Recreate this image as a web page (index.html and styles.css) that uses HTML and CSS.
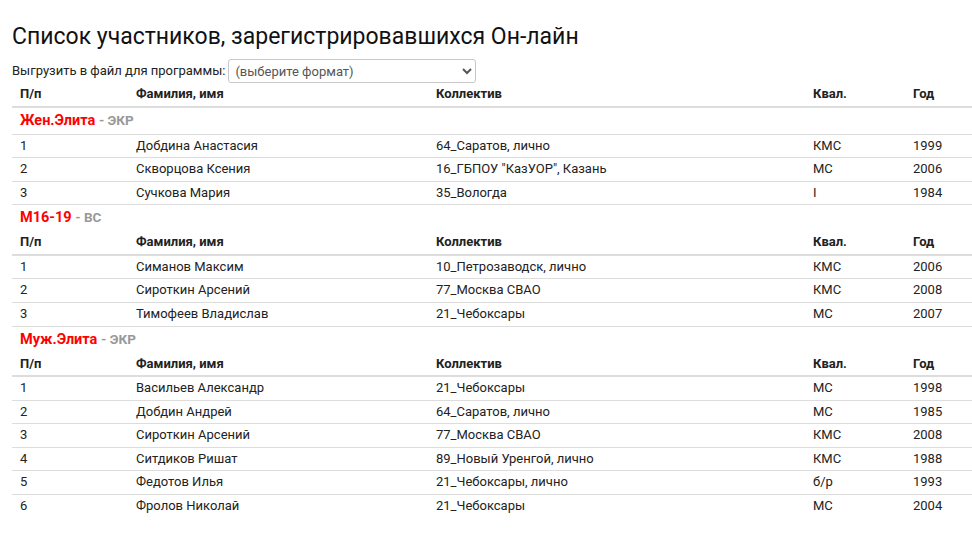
FILE: index.html
```html
<!DOCTYPE html>
<html lang="ru">
<head>
<meta charset="utf-8">
<title>Список участников</title>
<link rel="stylesheet" href="styles.css">
</head>
<body>
<div class="page">
  <h1 class="title">Список участников, зарегистрировавшихся Он-лайн</h1>
  <div class="export">
    <label for="fmt">Выгрузить в файл для программы:</label>
    <select id="fmt" class="fmt">
      <option>(выберите формат)</option>
    </select>
  </div>
  <table class="list">
    <colgroup>
      <col class="c1"><col class="c2"><col class="c3"><col class="c4"><col class="c5">
    </colgroup>
    <thead>
      <tr><th>П/п</th><th>Фамилия, имя</th><th>Коллектив</th><th>Квал.</th><th>Год</th></tr>
    </thead>
    <tbody>
      <tr class="group"><td colspan="5"><span class="gname">Жен.Элита</span> <span class="gdist">- ЭКР</span></td></tr>
      <tr><td>1</td><td>Добдина Анастасия</td><td>64_Саратов, лично</td><td>КМС</td><td>1999</td></tr>
      <tr><td>2</td><td>Скворцова Ксения</td><td>16_ГБПОУ "КазУОР", Казань</td><td>МС</td><td>2006</td></tr>
      <tr><td>3</td><td>Сучкова Мария</td><td>35_Вологда</td><td>I</td><td>1984</td></tr>

      <tr class="group"><td colspan="5"><span class="gname">М16-19</span> <span class="gdist">- ВС</span></td></tr>
      <tr class="head"><th>П/п</th><th>Фамилия, имя</th><th>Коллектив</th><th>Квал.</th><th>Год</th></tr>
      <tr><td>1</td><td>Симанов Максим</td><td>10_Петрозаводск, лично</td><td>КМС</td><td>2006</td></tr>
      <tr><td>2</td><td>Сироткин Арсений</td><td>77_Москва СВАО</td><td>КМС</td><td>2008</td></tr>
      <tr><td>3</td><td>Тимофеев Владислав</td><td>21_Чебоксары</td><td>МС</td><td>2007</td></tr>

      <tr class="group"><td colspan="5"><span class="gname">Муж.Элита</span> <span class="gdist">- ЭКР</span></td></tr>
      <tr class="head"><th>П/п</th><th>Фамилия, имя</th><th>Коллектив</th><th>Квал.</th><th>Год</th></tr>
      <tr><td>1</td><td>Васильев Александр</td><td>21_Чебоксары</td><td>МС</td><td>1998</td></tr>
      <tr><td>2</td><td>Добдин Андрей</td><td>64_Саратов, лично</td><td>МС</td><td>1985</td></tr>
      <tr><td>3</td><td>Сироткин Арсений</td><td>77_Москва СВАО</td><td>КМС</td><td>2008</td></tr>
      <tr><td>4</td><td>Ситдиков Ришат</td><td>89_Новый Уренгой, лично</td><td>КМС</td><td>1988</td></tr>
      <tr><td>5</td><td>Федотов Илья</td><td>21_Чебоксары, лично</td><td>б/р</td><td>1993</td></tr>
      <tr><td>6</td><td>Фролов Николай</td><td>21_Чебоксары</td><td>МС</td><td>2004</td></tr>
    </tbody>
  </table>
</div>
</body>
</html>
```
FILE: styles.css
```css
html, body {
  margin: 0;
  padding: 0;
  background: #fff;
}
body {
  font-family: Roboto, "Liberation Sans", Arial, sans-serif;
  font-size: 13px;
  line-height: 1.42857;
  color: #222;
}
.page {
  padding: 24px 0 0 12px;
}
.title {
  margin: 0 0 9px 0;
  font-size: 23px;
  font-weight: 400;
  line-height: 26px;
  color: #111;
}
.export {
  display: flex;
  align-items: center;
  gap: 3px;
  height: 24px;
}
.fmt {
  width: 248px;
  height: 24px;
  font-family: inherit;
  font-size: 13px;
  color: #555;
  border: 1px solid #c8c8c8;
  border-radius: 3px;
  background: #fff;
  padding: 0 2px;
}
.list {
  width: 960px;
  border-collapse: collapse;
  table-layout: fixed;
}
.c1 { width: 116px; }
.c2 { width: 300px; }
.c3 { width: 377px; }
.c4 { width: 100px; }
.c5 { width: 67px; }
.list th,
.list td {
  padding: 2px 8px;
  text-align: left;
  vertical-align: top;
  white-space: nowrap;
}
.list th {
  font-weight: 700;
  border-bottom: 2px solid #ddd;
}
.list td {
  border-top: 1px solid #ddd;
}
.list tr.group td {
  font-weight: 700;
  font-size: 14.5px;
  line-height: 21px;
  padding: 2px 8px 3px;
}
.gname {
  color: #f00;
}
.gdist {
  color: #999;
  font-size: 13.5px;
}
```
